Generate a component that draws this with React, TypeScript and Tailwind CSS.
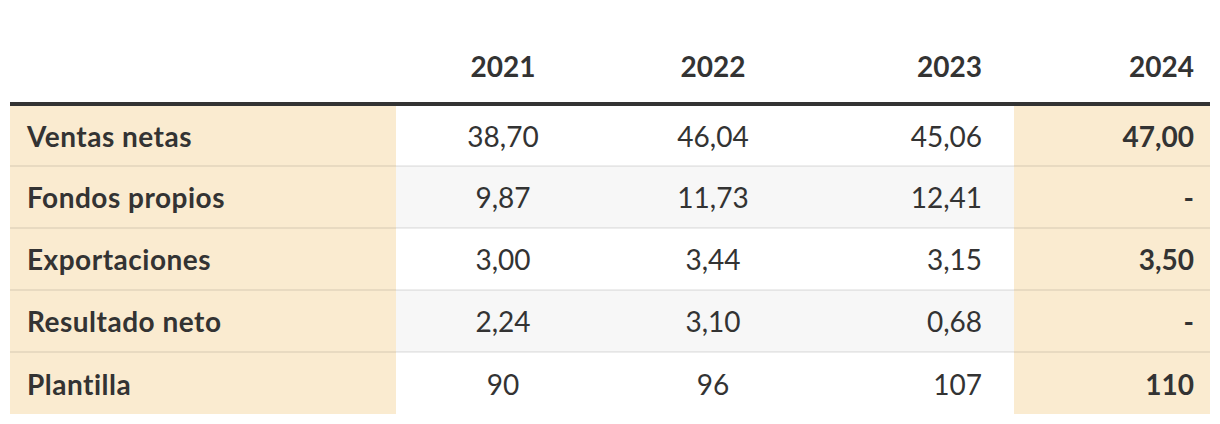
import React from "react";

const rows = [
  { label: "Ventas netas", values: ["38,70", "46,04", "45,06"], last: "47,00" },
  { label: "Fondos propios", values: ["9,87", "11,73", "12,41"], last: "-" },
  { label: "Exportaciones", values: ["3,00", "3,44", "3,15"], last: "3,50" },
  { label: "Resultado neto", values: ["2,24", "3,10", "0,68"], last: "-" },
  { label: "Plantilla", values: ["90", "96", "107"], last: "110" },
];

export default function App() {
  return (
    <div
      className="w-[1220px] h-[424px] bg-white px-[10px] pt-[42px] text-[#333]"
      style={{ fontFamily: 'Lato, "Noto Sans", sans-serif' }}
    >
      <table className="w-full table-fixed border-collapse text-[28px]">
        <colgroup>
          <col className="w-[386px]" />
          <col className="w-[214px]" />
          <col className="w-[206px]" />
          <col className="w-[198px]" />
          <col className="w-[196px]" />
        </colgroup>
        <thead>
          <tr className="h-[62px] border-b-4 border-[#333]">
            <th />
            <th className="text-center font-bold pb-[12px]">2021</th>
            <th className="text-center font-bold pb-[12px]">2022</th>
            <th className="text-right font-bold pr-[32px] pb-[12px]">2023</th>
            <th className="text-right font-bold pr-[16px] pb-[12px]">2024</th>
          </tr>
        </thead>
        <tbody>
          {rows.map((r, i) => {
            const stripe = i % 2 === 1 ? "bg-[#f7f7f7]" : "bg-white";
            return (
              <tr
                key={r.label}
                className={`h-[62px] ${i < rows.length - 1 ? "border-b-2 border-black/[0.07]" : ""}`}
              >
                <td className="bg-[#faebd0] pl-[17px] font-bold text-left tracking-[0.5px]">{r.label}</td>
                <td className={`${stripe} text-center`}>{r.values[0]}</td>
                <td className={`${stripe} text-center`}>{r.values[1]}</td>
                <td className={`${stripe} text-right pr-[32px]`}>{r.values[2]}</td>
                <td className="bg-[#faebd0] text-right pr-[16px] font-bold">{r.last}</td>
              </tr>
            );
          })}
        </tbody>
      </table>
    </div>
  );
}
